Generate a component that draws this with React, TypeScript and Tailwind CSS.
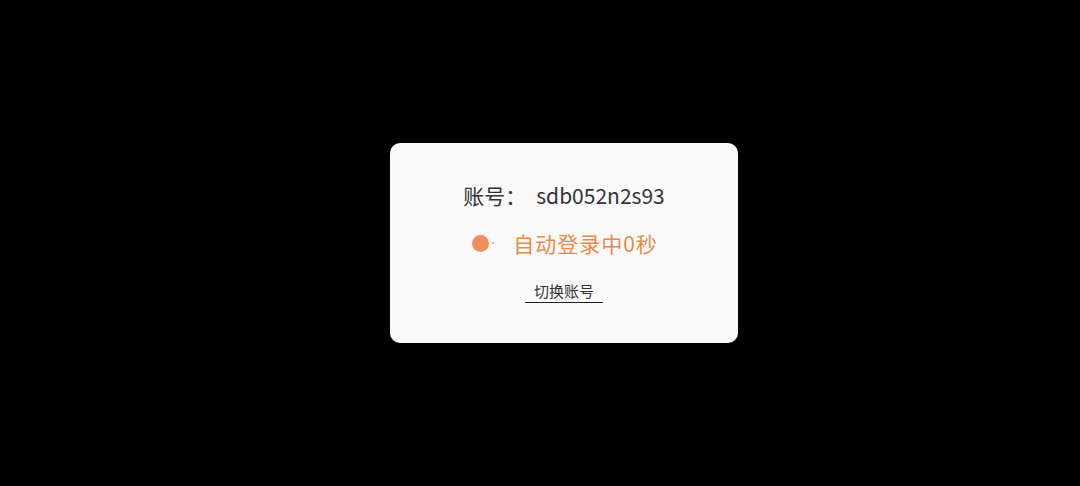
export default function App() {
  return (
    <div
      className="flex h-[486px] w-[1080px] items-center justify-center bg-black pl-[48px]"
      style={{ fontFamily: '"Noto Sans CJK SC", "Noto Sans", sans-serif' }}
    >
      <div className="flex h-[200px] w-[348px] flex-col items-center rounded-[10px] bg-[#fafafa] pt-[37px]">
        {/* account */}
        <div className="flex items-center text-[21px] leading-[30px] text-[#333333]">
          <span>账号：</span>
          <span className="ml-[10px]">sdb052n2s93</span>
        </div>

        {/* auto login status */}
        <div className="mt-[18px] flex items-center pl-[2px]">
          <span className="h-[17px] w-[17px] rounded-full bg-[#ee8f5f]" />
          <span className="ml-[3px] h-[2px] w-[2px] rounded-full bg-[#ee8f5f]" />
          <span className="ml-[19px] text-[21px] leading-[30px] tracking-[1px] text-[#e98a48]">
            自动登录中0秒
          </span>
        </div>

        {/* switch account */}
        <button
          type="button"
          className="mt-[22px] border-b border-[#222222] px-[9px] text-[15px] leading-[22px] text-[#333333]"
        >
          切换账号
        </button>
      </div>
    </div>
  );
}
